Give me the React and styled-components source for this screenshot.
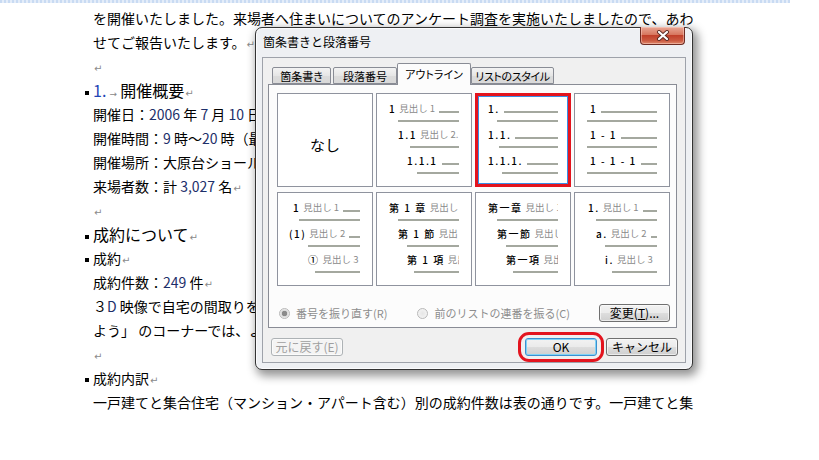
import React from 'react'
import styled, { createGlobalStyle } from 'styled-components'

const JP = `"Noto Sans CJK JP", "Noto Sans", sans-serif`

const GlobalStyle = createGlobalStyle`
  html, body {
    margin: 0;
    padding: 0;
    background: #fff;
    overflow: hidden;
  }
`

const Page = styled.div`
  position: relative;
  width: 819px;
  height: 460px;
  overflow: hidden;
  background: #fff;
  font-family: ${JP};
`

const RulerEdge = styled.div`
  height: 3px;
  width: 790px;
  background: repeating-linear-gradient(90deg, #c9dbf3 0 2px, #e4edf9 2px 4px);
`

const Doc = styled.div`
  padding: 3px 0 0 93px;
  width: 604px;
`

const Line = styled.div`
  height: 24px;
  line-height: 24px;
  font-size: ${p => (p.$big ? 16 : 14)}px;
  color: #000;
  white-space: nowrap;
  overflow: hidden;
  margin-left: ${p => (p.$bullet ? -8 : 0)}px;
`

const Bullet = styled.span`
  display: inline-block;
  width: 4px;
  height: 4px;
  margin-right: 4px;
  background: #000;
  vertical-align: middle;
`

const Num = styled.span`
  color: ${p => (p.$strong ? '#1f45b5' : '#1d2f6a')};
`

const Arrow = styled.span`
  display: inline-block;
  width: 14px;
  font-family: "DejaVu Sans", sans-serif;
  font-size: 9px;
  color: #888;
  text-align: center;
`

const Ret = styled.span`
  font-family: "DejaVu Sans", sans-serif;
  font-size: 10px;
  color: #8a8a8a;
  margin-left: 1px;
`

/* ---------- dialog ---------- */

const Dialog = styled.div`
  position: absolute;
  left: 255px;
  top: 27px;
  width: 438px;
  height: 343px;
  box-sizing: border-box;
  display: flex;
  flex-direction: column;
  border: 1px solid #333;
  border-radius: 7px;
  background: #eef0f3;
  box-shadow: 3px 4px 10px 2px rgba(0, 0, 0, 0.42), inset 0 0 0 1px #fbfbfd;
  font-family: ${JP};
`

const TitleBar = styled.div`
  height: 29px;
  display: flex;
  align-items: flex-start;
  flex-shrink: 0;
`

const Title = styled.div`
  margin: 6px 0 0 7px;
  line-height: 16px;
  font-size: 12px;
  color: #000;
`

const CloseButton = styled.div`
  margin: -1px 7px 0 auto;
  width: 45px;
  height: 18px;
  box-sizing: border-box;
  display: flex;
  align-items: center;
  justify-content: center;
  border: 1px solid #6d2b22;
  border-top: none;
  border-radius: 0 0 4px 4px;
  background: linear-gradient(#e9a795 0%, #d7775f 45%, #c1402a 50%, #cb5a41 80%, #e08a6c 100%);
  box-shadow: inset 0 0 0 1px rgba(255, 220, 210, 0.45);
`

const Client = styled.div`
  flex: 1;
  margin: 0 6px 6px;
  display: flex;
  flex-direction: column;
  padding: 5px 8px 6px 5px;
  border: 1px solid #9ea2aa;
  background: #f0f0f0;
`

const TabStrip = styled.div`
  display: flex;
  align-items: flex-end;
  height: 21px;
  padding-left: 3px;
  position: relative;
  z-index: 1;
`

const Tab = styled.div`
  box-sizing: border-box;
  width: ${p => p.$w}px;
  height: ${p => (p.$active ? 22 : 17)}px;
  margin: 0 ${p => (p.$active ? -1 : 1)}px ${p => (p.$active ? -1 : 0)}px;
  display: flex;
  align-items: center;
  justify-content: center;
  padding-bottom: ${p => (p.$active ? 2 : 0)}px;
  border: 1px solid #898c95;
  border-bottom: ${p => (p.$active ? 'none' : '1px solid #898c95')};
  border-radius: 2px 2px 0 0;
  background: ${p => (p.$active ? '#fcfcfc' : 'linear-gradient(#f3f3f3, #e6e6e6 50%, #dcdcdc 51%, #d9d9d9)')};
  font-size: 11px;
  font-feature-settings: "palt";
  letter-spacing: ${p => (p.$tight ? '-0.4px' : '0')};
  white-space: nowrap;
  color: #000;
  position: relative;
  z-index: ${p => (p.$active ? 2 : 1)};
`

const Panel = styled.div`
  border: 1px solid #898c95;
  background: #fcfcfc;
  padding: 8px 6px 5px 8px;
`

const Grid = styled.div`
  display: grid;
  grid-template-columns: repeat(4, 96px);
  grid-auto-rows: 94px;
  column-gap: 3px;
  row-gap: 5px;
`

const Cell = styled.div`
  box-sizing: border-box;
  border: 1px solid ${p => (p.$selected ? '#e3141e' : '#8f939e')};
  box-shadow: ${p => (p.$selected ? 'inset 0 0 0 2px #e3141e, inset 0 0 0 3px #3a8ee6' : 'none')};
  background: #fff;
  padding: 8px 12px 0 0;
  overflow: hidden;
  display: ${p => (p.$none ? 'flex' : 'block')};
  align-items: center;
  justify-content: center;
`

const NoneLabel = styled.span`
  font-size: 15px;
  color: #000;
  margin-left: 12px;
`

const LevelText = styled.div`
  display: flex;
  align-items: center;
  height: 13px;
  padding-left: ${p => p.$t - 1}px;
  white-space: nowrap;
  overflow: hidden;
`

const LevelNum = styled.span`
  flex-shrink: 0;
  font-family: "Noto Sans CJK JP", "DejaVu Sans", sans-serif;
  font-size: 10px;
  font-weight: 500;
  line-height: 13px;
  letter-spacing: 1.5px;
  color: #000;
`

const LevelName = styled.span`
  flex-shrink: 0;
  margin-left: 3px;
  font-size: 9.5px;
  line-height: 13px;
  color: #8a8a8a;
`

const Trail = styled.span`
  flex: 1;
  min-width: 0;
  height: 2px;
  align-self: flex-end;
  margin: 0 0 2px 4px;
  background: #a4a89f;
`

const Rule = styled.div`
  height: 2px;
  margin: 5px 0 6px ${p => p.$r - 1}px;
  background: #a4a89f;
`

const OptionRow = styled.div`
  margin-top: 18px;
  height: 18px;
  display: flex;
  align-items: center;
  font-size: 11px;
  color: #8d8d8d;
  white-space: nowrap;
`

const OptionLabel = styled.span`
  line-height: 14px;
`

const Radio = styled.span`
  width: 11px;
  height: 11px;
  box-sizing: border-box;
  border-radius: 50%;
  border: 1px solid #b9b9b9;
  background: ${p => (p.$checked ? 'radial-gradient(circle, #8b8b8b 0 2.5px, #d8d8d8 3px, #f4f4f4 5px)' : 'radial-gradient(circle, #e6e6e6, #f7f7f7)')};
  margin: 0 6px 0 ${p => p.$gap}px;
  flex-shrink: 0;
`

const Button = styled.div`
  width: ${p => p.$w || 72}px;
  height: 18px;
  box-sizing: border-box;
  display: flex;
  align-items: center;
  justify-content: center;
  border: 1px solid ${p => (p.$disabled ? '#adb2b5' : p.$default ? '#3c8fcf' : '#707070')};
  border-radius: 3px;
  background: ${p => (p.$disabled ? '#f4f4f4' : 'linear-gradient(#f2f2f2 0%, #ebebeb 48%, #dddddd 52%, #cfcfcf 100%)')};
  box-shadow: ${p => (p.$default ? 'inset 0 0 0 1px #7fd3f6' : 'inset 0 0 0 1px rgba(255,255,255,0.6)')};
  font-size: 12px;
  line-height: 14px;
  color: ${p => (p.$disabled ? '#9f9f9f' : '#000')};
  white-space: nowrap;
  margin-left: ${p => (p.$push ? 'auto' : `${p.$ml || 0}px`)};
`

const Footer = styled.div`
  margin-top: auto;
  display: flex;
  align-items: center;
  padding: 0 0 0 3px;
  margin-right: -1px;
`

const Highlight = styled.div`
  position: relative;
  margin-left: auto;
  &::after {
    content: '';
    position: absolute;
    inset: -6px -7px;
    border: 3px solid #e3141e;
    border-radius: 11px;
    pointer-events: none;
  }
`

const cells = [
  { none: true },
  {
    levels: [
      { t: 13, n: '1', h: '見出し 1', r: 22 },
      { t: 22, n: '1.1', h: '見出し 2.', r: 34 },
      { t: 31, n: '1.1.1', r: 41 },
    ],
  },
  {
    selected: true,
    levels: [
      { t: 13, n: '1.', r: 22 },
      { t: 13, n: '1.1.', r: 24 },
      { t: 13, n: '1.1.1.', r: 27 },
    ],
  },
  {
    levels: [
      { t: 16, n: '1', r: 13 },
      { t: 16, n: '1 - 1', r: 13 },
      { t: 16, n: '1 - 1 - 1', r: 13 },
    ],
  },
  {
    levels: [
      { t: 16, n: '1', h: '見出し 1', r: 22 },
      { t: 12, n: '(1)', h: '見出し 2', r: 31 },
      { t: 31, n: '①', h: '見出し 3', r: 38 },
    ],
  },
  {
    levels: [
      { t: 13, n: '第 1 章', h: '見出し 1', r: 22 },
      { t: 22, n: '第 1 節', h: '見出し 2', r: 31 },
      { t: 31, n: '第 1 項', h: '見出し 3', r: 38 },
    ],
  },
  {
    levels: [
      { t: 13, n: '第一章', h: '見出し 1', r: 22 },
      { t: 22, n: '第一節', h: '見出し 2', r: 31 },
      { t: 31, n: '第一項', h: '見出し 3', r: 38 },
    ],
  },
  {
    levels: [
      { t: 14, n: '1.', h: '見出し 1', r: 22 },
      { t: 22, n: 'a.', h: '見出し 2', r: 31 },
      { t: 31, n: 'i.', h: '見出し 3', r: 38 },
    ],
  },
]

function OutlineCell({ cell }) {
  if (cell.none) {
    return (
      <Cell $none>
        <NoneLabel>なし</NoneLabel>
      </Cell>
    )
  }
  return (
    <Cell $selected={cell.selected}>
      {cell.levels.map((lv, i) => (
        <div key={i}>
          <LevelText $t={lv.t}>
            <LevelNum>{lv.n}</LevelNum>
            {lv.h && <LevelName>{lv.h}</LevelName>}
            <Trail />
          </LevelText>
          <Rule $r={lv.r} />
        </div>
      ))}
    </Cell>
  )
}

export default function App() {
  return (
    <Page>
      <GlobalStyle />
      <RulerEdge />
      <Doc>
        <Line>を開催いたしました。来場者へ住まいについてのアンケート調査を実施いたしましたので、あわ</Line>
        <Line>せてご報告いたします。<Ret>↵</Ret></Line>
        <Line><Ret>↵</Ret></Line>
        <Line $big $bullet>
          <Bullet />
          <Num $strong>1.</Num>
          <Arrow>→</Arrow>開催概要<Ret>↵</Ret>
        </Line>
        <Line>開催日：<Num>2006</Num> 年 <Num>7</Num> 月 <Num>10</Num> 日（月）～ <Num>7</Num> 月 <Num>16</Num> 日（日）<Ret>↵</Ret></Line>
        <Line>開催時間：<Num>9</Num> 時～<Num>20</Num> 時（最終日は <Num>17</Num> 時まで）<Ret>↵</Ret></Line>
        <Line>開催場所：大原台ショールーム<Ret>↵</Ret></Line>
        <Line>来場者数：計 <Num>3,027</Num> 名<Ret>↵</Ret></Line>
        <Line><Ret>↵</Ret></Line>
        <Line $big $bullet><Bullet />成約について<Ret>↵</Ret></Line>
        <Line $bullet><Bullet />成約<Ret>↵</Ret></Line>
        <Line>成約件数：<Num>249</Num> 件<Ret>↵</Ret></Line>
        <Line>３<Num>D</Num> 映像で自宅の間取りを立体的に確認できる「わが家の新しい暮らしを体験してみまし</Line>
        <Line>よう」 のコーナーでは、より具体的なプランのご相談をいただきました。<Ret>↵</Ret></Line>
        <Line><Ret>↵</Ret></Line>
        <Line $bullet><Bullet />成約内訳<Ret>↵</Ret></Line>
        <Line>一戸建てと集合住宅（マンション・アパート含む）別の成約件数は表の通りです。一戸建てと集</Line>
      </Doc>

      <Dialog>
        <TitleBar>
          <Title>箇条書きと段落番号</Title>
          <CloseButton>
            <svg width="14" height="11" viewBox="0 0 14 11">
              <path d="M3 2 L11 9 M11 2 L3 9" stroke="#5a2a22" strokeWidth="4" strokeLinecap="round" />
              <path d="M3 2 L11 9 M11 2 L3 9" stroke="#fff" strokeWidth="2.2" strokeLinecap="round" />
            </svg>
          </CloseButton>
        </TitleBar>
        <Client>
          <TabStrip>
            <Tab $w={59}>箇条書き</Tab>
            <Tab $w={64}>段落番号</Tab>
            <Tab $w={74} $active>アウトライン</Tab>
            <Tab $w={83} $tight>リストのスタイル</Tab>
          </TabStrip>
          <Panel>
            <Grid>
              {cells.map((c, i) => (
                <OutlineCell key={i} cell={c} />
              ))}
            </Grid>
            <OptionRow>
              <Radio $checked $gap={2} />
              <OptionLabel>番号を振り直す(R)</OptionLabel>
              <Radio $gap={30} />
              <OptionLabel>前のリストの連番を振る(C)</OptionLabel>
              <Button $w={71} $push>
                変更(<u>T</u>)...
              </Button>
            </OptionRow>
          </Panel>
          <Footer>
            <Button $disabled>元に戻す(E)</Button>
            <Highlight>
              <Button $default>OK</Button>
            </Highlight>
            <Button $ml={9}>キャンセル</Button>
          </Footer>
        </Client>
      </Dialog>
    </Page>
  )
}
